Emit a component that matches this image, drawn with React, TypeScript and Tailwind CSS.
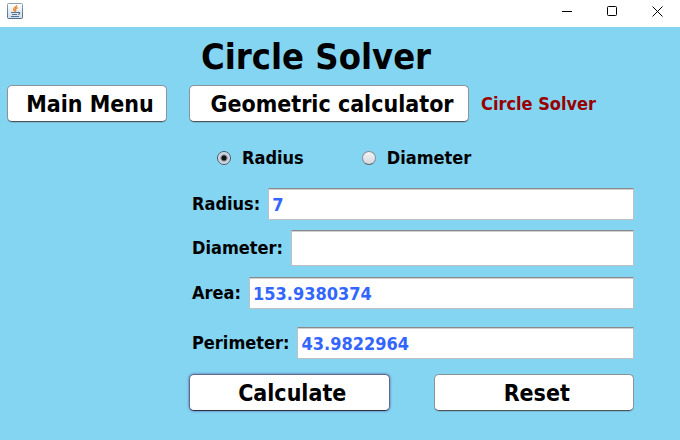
import React, { useState } from 'react';

type Mode = 'radius' | 'diameter';

interface ButtonProps {
  children: React.ReactNode;
  className?: string;
  focused?: boolean;
  onClick?: () => void;
}

interface FieldProps {
  id: string;
  label: string;
  value: string;
  className?: string;
  readOnly?: boolean;
  onChange?: (value: string) => void;
}

interface ModeRadioProps {
  id: string;
  label: string;
  checked: boolean;
  onChange: () => void;
}

const JavaIcon: React.FC = () => (
  <svg width="16" height="16" viewBox="0 0 16 16" fill="none" aria-hidden="true">
    <defs>
      <linearGradient id="java-bg" x1="0" y1="0" x2="0" y2="1">
        <stop offset="0" stopColor="#ffffff" />
        <stop offset="1" stopColor="#d3dbe3" />
      </linearGradient>
      <linearGradient id="java-edge" x1="0" y1="0" x2="0" y2="1">
        <stop offset="0" stopColor="#8c9fb0" />
        <stop offset="1" stopColor="#4c6f8e" />
      </linearGradient>
    </defs>
    <rect x="0.5" y="0.5" width="15" height="15" rx="1" fill="url(#java-bg)" stroke="url(#java-edge)" />
    <path d="M9.6 2.2C10.2 3.9 6.3 4.6 6.6 6.4C6.7 7.2 7.5 7.7 7.6 8.6M10.6 4.6C8.9 5.2 8 6 8.6 6.9C9 7.5 8.8 8 8.3 8.4" stroke="#e8852b" strokeWidth="1.4" />
    <path d="M4 9.5H11M5 11.5H10M4 13.5H12M11 9.5C13.6 8.7 13.5 11 11 11.5" stroke="#4f7596" strokeWidth="1.1" />
  </svg>
);

const TitleBar: React.FC = () => (
  <header className="flex h-[27px] items-start justify-between bg-white pt-[3px] pl-[7px]">
    <JavaIcon />
    <div className="flex">
      <button type="button" aria-label="Minimize" className="flex h-4 w-[45px] items-center justify-center">
        <svg width="11" height="11" viewBox="0 0 11 11" stroke="#000" fill="none">
          <path d="M0 5.5H10" />
        </svg>
      </button>
      <button type="button" aria-label="Maximize" className="flex h-4 w-[45px] items-center justify-center">
        <svg width="11" height="11" viewBox="0 0 11 11" stroke="#000" fill="none">
          <rect x="0.5" y="0.5" width="9" height="9" rx="1" />
        </svg>
      </button>
      <button type="button" aria-label="Close" className="flex h-4 w-[45px] items-center justify-center">
        <svg width="11" height="11" viewBox="0 0 11 11" stroke="#000" fill="none">
          <path d="M0.5 0.5L10.5 10.5M10.5 0.5L0.5 10.5" />
        </svg>
      </button>
    </div>
  </header>
);

const Button: React.FC<ButtonProps> = ({ children, className = '', focused = false, onClick }) => (
  <button
    type="button"
    onClick={onClick}
    className={`h-[37px] rounded-[5px] border bg-white pl-[6px] text-[23px] leading-7 font-bold whitespace-nowrap text-black ${
      focused
        ? 'border-[#5f6a88] border-b-[#2b3040] shadow-[0_0_2px_1px_#6f9fd0]'
        : 'border-[#8b9298] border-b-[#4e5458] shadow-[0_1px_0_#78b8d2]'
    } ${className}`}
  >
    {children}
  </button>
);

const ModeRadio: React.FC<ModeRadioProps> = ({ id, label, checked, onChange }) => (
  <div className="flex items-center gap-[11px]">
    <input
      id={id}
      type="radio"
      name="mode"
      checked={checked}
      onChange={onChange}
      className="size-[14px] appearance-none rounded-full border border-[#8a9199] border-b-[#5c6268] bg-linear-to-b from-[#f4f4f6] to-[#d6d8de] checked:border-[#4a5664] checked:bg-[radial-gradient(circle,#111_2px,#7d8b9b_3px,#c3ccd8_4px,#dde3ea_6px)]"
    />
    <label htmlFor={id} className="text-lg leading-5 font-bold">{label}</label>
  </div>
);

const Field: React.FC<FieldProps> = ({ id, label, value, className = 'h-8', readOnly = false, onChange }) => (
  <div className={`flex items-center gap-2 ${className}`}>
    <label htmlFor={id} className="text-lg leading-5 font-bold">{label}</label>
    <input
      id={id}
      type="text"
      value={value}
      readOnly={readOnly}
      onChange={e => onChange?.(e.target.value)}
      className="h-full min-w-0 flex-1 border border-[#c0c0c0] border-t-[#8a8a8a] bg-white px-[3px] text-lg font-bold text-[#3366ff] shadow-[inset_0_1px_0_#d0d0d0] outline-none"
    />
  </div>
);

export default function App() {
  const [mode, setMode] = useState<Mode>('radius');
  const [radius, setRadius] = useState('7');
  const [diameter, setDiameter] = useState('');
  const [area, setArea] = useState('153.9380374');
  const [perimeter, setPerimeter] = useState('43.9822964');

  const calculate = () => {
    const r = mode === 'radius' ? Number(radius) : Number(diameter) / 2;
    setArea((Math.PI * r * r).toFixed(7));
    setPerimeter((2 * Math.PI * r).toFixed(7));
  };

  const reset = () => {
    setRadius('');
    setDiameter('');
    setArea('');
    setPerimeter('');
  };

  return (
    <div className="flex min-h-screen flex-col bg-[#84d5f2] font-['DejaVu_Sans_Condensed','DejaVu_Sans',sans-serif] text-black">
      <TitleBar />
      <main className="grid grid-cols-[160px_1fr] gap-x-[22px] pt-2 pl-[7px]">
        <h1 className="col-start-2 pl-3 text-4xl leading-[44px] font-bold">Circle Solver</h1>

        <Button className="mt-[6px]">Main Menu</Button>
        <div className="mt-[6px] flex items-center gap-3">
          <Button className="w-[280px]">Geometric calculator</Button>
          <span className="text-lg leading-5 font-bold text-[#990000]">Circle Solver</span>
        </div>

        <form className="col-start-2 pr-[46px]" onSubmit={e => e.preventDefault()}>
          <div className="flex gap-[58px] pt-[26px] pb-5 pl-7">
            <ModeRadio id="mode-radius" label="Radius" checked={mode === 'radius'} onChange={() => setMode('radius')} />
            <ModeRadio id="mode-diameter" label="Diameter" checked={mode === 'diameter'} onChange={() => setMode('diameter')} />
          </div>

          <div className="pl-[3px]">
            <Field id="radius" label="Radius:" value={radius} onChange={setRadius} />
            <Field id="diameter" label="Diameter:" value={diameter} onChange={setDiameter} className="mt-[10px] h-9" />
            <Field id="area" label="Area:" value={area} readOnly className="mt-[11px] h-8" />
            <Field id="perimeter" label="Perimeter:" value={perimeter} readOnly className="mt-[18px] h-8" />
          </div>

          <div className="mt-[15px] grid grid-cols-2 gap-11">
            <Button focused onClick={calculate}>Calculate</Button>
            <Button onClick={reset}>Reset</Button>
          </div>
        </form>
      </main>
    </div>
  );
}
